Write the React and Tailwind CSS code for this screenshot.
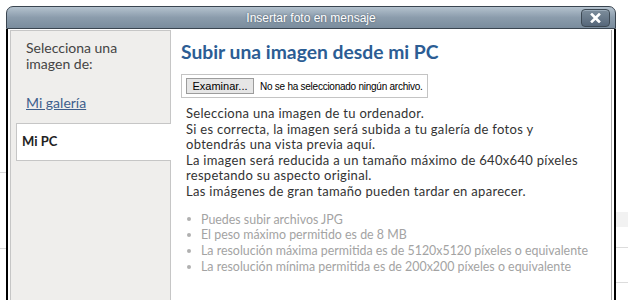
import React from 'react';

const bodyFont = { fontFamily: 'Lato, "Open Sans", sans-serif' };

const reglas = [
  'Puedes subir archivos JPG',
  'El peso máximo permitido es de 8 MB',
  'La resolución máxima permitida es de 5120x5120 píxeles o equivalente',
  'La resolución mínima permitida es de 200x200 píxeles o equivalente',
];

function TitleBar() {
  return (
    <div className="relative h-[23px] shrink-0 rounded-t-[7px] border border-[#3a4550] bg-gradient-to-b from-[#b4c2ce] via-[#8b9cac] to-[#7a8c9d] flex items-center justify-center">
      <span className="text-[12px] text-white [text-shadow:0_0_2px_#4a5866] font-['Liberation_Sans',Arial,sans-serif]">
        Insertar foto en mensaje
      </span>
      {/* boton cerrar */}
      <button className="absolute right-[5px] top-[2px] w-[29px] h-[18px] rounded-[4px] border border-[#3e4a55] bg-gradient-to-b from-[#7d8d9b] to-[#56677a] shadow-[inset_0_1px_0_#9aaab8] flex items-center justify-center">
        <svg width="11" height="10" viewBox="0 0 11 10">
          <path d="M2 1.5 L9 8.5 M9 1.5 L2 8.5" stroke="#ffffff" strokeWidth="2.6" strokeLinecap="square" />
        </svg>
      </button>
    </div>
  );
}

function Sidebar() {
  return (
    <aside className="w-[161px] shrink-0 bg-[#efeeec] border border-[#c6c6c6] border-b-0 pt-[9px] text-[14px] text-[#444]" style={bodyFont}>
      <p className="pl-[15px] leading-[16px]">
        Selecciona una
        <br />
        imagen de:
      </p>
      <a href="#" className="block pl-[15px] mt-[23px] leading-[16px] text-[#3e5f8c] underline">
        Mi galería
      </a>
      <div className="ml-[5px] -mr-[1px] mt-[12px] h-[38px] bg-white border border-r-0 border-[#c6c6c6] flex items-center pl-[5px] text-[13px] font-bold text-[#222]">
        Mi PC
      </div>
    </aside>
  );
}

function Main() {
  return (
    <section className="flex-1 bg-white border-r border-[#a8a8a8] pl-[10px] pt-[9px]" style={bodyFont}>
      <h1 className="text-[19.3px] leading-[26px] font-bold text-[#2c5d94]">Subir una imagen desde mi PC</h1>

      <div className="mt-[9px] w-[247px] h-[24px] border border-[#c4c4c4] flex items-center pl-[4px] gap-[6px]">
        <button className="h-[16px] w-[68px] shrink-0 bg-[#e6e6e6] border border-[#9c9c9c] text-[11px] leading-[14px] text-black font-['Liberation_Sans',Arial,sans-serif]">
          Examinar...
        </button>
        <span className="whitespace-nowrap text-[10px] tracking-[-0.25px] text-black font-['Liberation_Sans',Arial,sans-serif]">
          No se ha seleccionado ningún archivo.
        </span>
      </div>

      <p className="ml-[5px] mt-[8px] text-[13px] tracking-[0.3px] leading-[15.6px] text-[#333]">
        Selecciona una imagen de tu ordenador.
        <br />
        Si es correcta, la imagen será subida a tu galería de fotos y
        <br />
        obtendrás una vista previa aquí.
        <br />
        La imagen será reducida a un tamaño máximo de 640x640 píxeles
        <br />
        respetando su aspecto original.
        <br />
        Las imágenes de gran tamaño pueden tardar en aparecer.
      </p>

      <ul className="ml-[5px] mt-[12px] text-[12.4px] leading-[15.7px] text-[#a3a3a3]">
        {reglas.map((r) => (
          <li key={r} className="flex items-center">
            <span className="w-[4px] h-[4px] rounded-full bg-[#b0b0b0] ml-[1px] mr-[10px]" />
            {r}
          </li>
        ))}
      </ul>
    </section>
  );
}

export default function App() {
  return (
    <div className="relative w-[628px] h-[300px] overflow-hidden bg-white">
      {/* pagina de fondo */}
      <div className="flex justify-between h-full">
        <div className="w-[6px] flex flex-col pt-[172px] gap-[75px]">
          <div className="h-px bg-[#d8d8d8]" />
          <div className="h-px bg-[#d8d8d8]" />
        </div>
        <div className="w-[12px] flex flex-col pt-[212px]">
          <div className="h-[15px] bg-[#f2f2f2]" />
          <div className="h-px mt-[20px] bg-[#dcdcdc]" />
          <div className="h-px mt-[34px] bg-[#dcdcdc]" />
        </div>
      </div>

      {/* dialogo */}
      <div className="absolute left-[6px] top-[6px] w-[610px] h-[300px] flex flex-col">
        <TitleBar />
        <div className="flex-1 flex bg-white border-x-2 border-black px-[2px] pt-[1px]">
          <Sidebar />
          <Main />
        </div>
      </div>
    </div>
  );
}
